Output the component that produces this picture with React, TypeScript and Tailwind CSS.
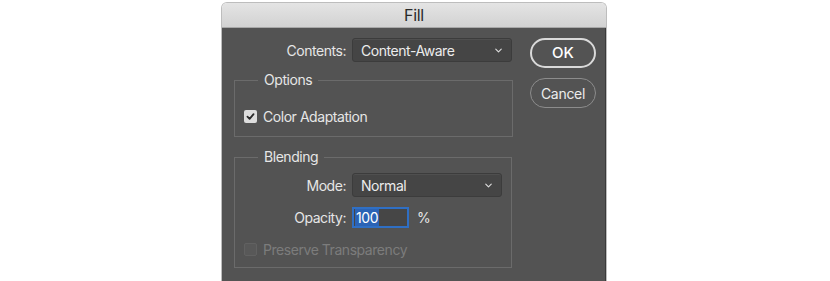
import { ChevronDown } from 'lucide-react';

const font = { fontFamily: 'Inter, "Noto Sans", sans-serif' };

const Select = ({ value, width }: { value: string; width: string }) => (
  <div
    className={`${width} h-[24px] flex items-center justify-between pl-[8px] pr-[7px] bg-[#454545] border border-[#3c3c3c] rounded-[3px] shadow-[inset_0_1px_0_rgba(255,255,255,0.06)] text-[#ececec] text-[14px] tracking-[-0.45px]`}
  >
    <span className="pt-[1px]">{value}</span>
    <ChevronDown size={11} strokeWidth={2.5} className="text-[#dcdcdc]" />
  </div>
);

export default function App() {
  return (
    <div className="w-[830px] h-[281px] bg-white overflow-hidden pt-[2px]" style={font}>
      <div className="ml-[221px] w-[386px] rounded-t-[6px] overflow-hidden border-x border-t border-[#bdbdbd]">
        <div className="h-[25px] bg-gradient-to-b from-[#e4e4e4] to-[#d2d2d2] border-b border-[#a8a8a8] flex items-center justify-center text-[16px] tracking-[-0.3px] text-[#2a2a2a]">
          Fill
        </div>

        <div className="h-[260px] bg-[#535353] border-r border-[#3a3a3a] flex pt-[10px] pl-[12px] text-[14px] tracking-[-0.45px]">
          {/* left column */}
          <div className="w-[279px] flex flex-col">
            <div className="flex items-center h-[24px]">
              <div className="w-[112px] pt-[1px] text-right text-[#e6e6e6]">Contents:</div>
              <div className="ml-[6px]">
                <Select value="Content-Aware" width="w-[160px]" />
              </div>
            </div>

            <fieldset className="mt-[9px] border border-[#6b6b6b] pl-[9px] pb-[11px]">
              <legend className="ml-[14px] px-[6px] leading-[18px] text-[#e6e6e6]">Options</legend>
              <div className="mt-[18px] flex items-center h-[18px] gap-[6px]">
                <div className="w-[13px] h-[13px] rounded-[2px] bg-[#dedede] flex items-center justify-center">
                  <svg width="9" height="9" viewBox="0 0 10 10">
                    <path d="M1.6 5.2 L4 7.6 L8.4 2.4" fill="none" stroke="#2a2a2a" strokeWidth="2" strokeLinecap="round" strokeLinejoin="round" />
                  </svg>
                </div>
                <span className="pt-[1px] text-[#e6e6e6]">Color Adaptation</span>
              </div>
            </fieldset>

            <fieldset className="mt-[11px] w-[278px] border border-[#6b6b6b] pl-[9px] pb-[9px]">
              <legend className="ml-[14px] px-[6px] leading-[18px] text-[#e6e6e6]">Blending</legend>
              <div className="mt-[7px] flex items-center h-[24px] -ml-[9px]">
                <div className="w-[111px] pt-[1px] text-right text-[#e6e6e6]">Mode:</div>
                <div className="ml-[6px]">
                  <Select value="Normal" width="w-[150px]" />
                </div>
              </div>
              <div className="mt-[10px] flex items-center h-[20px] -ml-[9px]">
                <div className="w-[111px] text-right text-[#e6e6e6]">Opacity:</div>
                <div className="ml-[6px] w-[57px] h-[21px] border-2 border-[#2f6fc4] bg-[#464646] flex items-center pl-[1px]">
                  <span className="bg-[#2b63b5] text-white leading-[17px] px-[1px]">100</span>
                </div>
                <span className="ml-[8px] text-[#e6e6e6]">%</span>
              </div>
              <div className="mt-[13px] flex items-center h-[18px] gap-[6px]">
                <div className="w-[13px] h-[13px] rounded-[2px] border border-[#616161] bg-[#585858]" />
                <span className="pt-[1px] text-[#7c7c7c]">Preserve Transparency</span>
              </div>
            </fieldset>
          </div>

          {/* buttons */}
          <div className="ml-[17px] w-[66px] flex flex-col tracking-normal">
            <div className="h-[30px] rounded-full border-2 border-[#d9d9d9] flex items-center justify-center text-[15px] font-medium text-white">
              OK
            </div>
            <div className="mt-[10px] h-[30px] rounded-full border border-[#8c8c8c] flex items-center justify-center text-[14px] tracking-[-0.3px] text-[#ececec]">
              Cancel
            </div>
          </div>
        </div>
      </div>
    </div>
  );
}
